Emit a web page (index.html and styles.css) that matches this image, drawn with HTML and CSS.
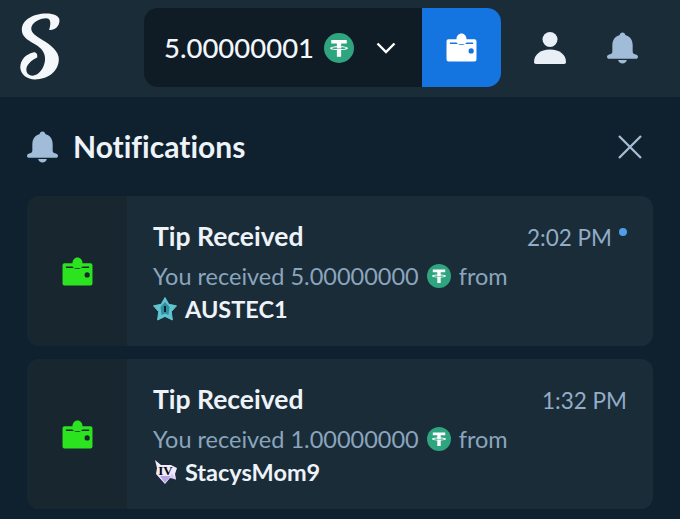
FILE: index.html
```html
<!DOCTYPE html>
<html lang="en">
<head>
<meta charset="utf-8">
<title>Notifications</title>
<link rel="stylesheet" href="styles.css">
</head>
<body>
<svg class="sprites" width="0" height="0" aria-hidden="true">
  <defs>
    <symbol id="wallet" viewBox="0 0 32 30">
      <path fill="currentColor" d="M2.500 6.500H10.800C10.800 3 13 .5 16 .5S21.200 3 21.200 6.500H29.500A2 2 0 0 1 31.500 8.500V27.500A2 2 0 0 1 29.500 29.500H2.500A2 2 0 0 1 .5 27.500V8.500A2 2 0 0 1 2.500 6.500Z"/>
      <path class="wallet-cut" d="M4 9.800H10.800C11.800 11.200 13.700 12.200 16 12.200S20.200 11.200 21.200 9.800H28V11.300H4Z"/>
      <circle class="wallet-cut" cx="26" cy="18.500" r="2.700"/>
    </symbol>
    <symbol id="bell" viewBox="0 0 32 32">
      <path fill="currentColor" d="M16 0C17.600 0 18.700 1 18.900 2.600 24 4 26.500 8 26.500 13.500V19.500C26.500 21 27.200 22 29 22.500 31 23 32 24 32 25.200 32 26.500 31 27 29.800 27H2.200C1 27 0 26.500 0 25.200 0 24 1 23 3 22.500 4.800 22 5.500 21 5.500 19.500V13.500C5.500 8 8 4 13.100 2.600 13.300 1 14.400 0 16 0Z"/>
      <path fill="currentColor" d="M11.500 28.500H20.500C20 30.800 18.200 32 16 32S12 30.800 11.500 28.500Z"/>
    </symbol>
    <symbol id="tether" viewBox="0 0 24 24">
      <circle cx="12" cy="12" r="12" fill="#2fa57f"/>
      <path fill="#fff" d="M5.800 5.500H18.200V8.300H13.700V10.600C16.800 10.800 19.100 11.400 19.100 12.100S16.800 13.400 13.700 13.600V19H10.300V13.600C7.200 13.400 4.900 12.800 4.900 12.100S7.200 10.800 10.300 10.600V8.300H5.800ZM10.300 11.400C8 11.500 6.300 11.800 6.300 12.100 6.300 12.500 8.800 12.800 12 12.800S17.700 12.500 17.700 12.100C17.700 11.800 16 11.500 13.700 11.400V12.300H10.300Z"/>
    </symbol>
  </defs>
</svg>

<header class="topbar">
  <svg class="logo" viewBox="40 25 135 220" aria-label="Logo">
    <path fill="#f4f8fb" d="M135 82C150 85 168 72 168 52 168 38 150 30 125 30 85 30 48 50 48 82 48 100 62 112 90 128 112 141 123 155 122 178 120 205 100 228 82 228 68 228 60 218 63 203 67 190 80 178 97 170 99 160 93 151 84 154 62 160 43 175 43 203 45 225 65 240 90 240 130 240 166 215 166 175 166 150 140 130 115 115 90 100 78 92 78 78 78 60 105 45 125 45 140 45 142 60 135 82Z"/>
  </svg>
  <div class="wallet-pill">
    <div class="balance">
      <span class="balance-value">5.00000001</span>
      <svg class="coin-lg"><use href="#tether"/></svg>
      <svg class="chevron" viewBox="0 0 20 12"><path d="M1.500 1.500 10 10 18.500 1.500" fill="none" stroke="#fff" stroke-width="2.400"/></svg>
    </div>
    <div class="wallet-btn">
      <svg class="wallet-icon on-blue"><use href="#wallet"/></svg>
    </div>
  </div>
  <div class="top-icons">
    <svg class="person" viewBox="0 0 32 32"><circle cx="16" cy="7.500" r="7.500" fill="#e8eff6"/><path fill="#e8eff6" d="M0 30C0 23 6 17.500 16 17.500S32 23 32 30C32 31 31.300 32 30 32H2C.7 32 0 31 0 30Z"/></svg>
    <svg class="bell-top"><use href="#bell"/></svg>
  </div>
</header>

<main class="panel">
  <div class="panel-head">
    <svg class="bell-title"><use href="#bell"/></svg>
    <h1 class="panel-title">Notifications</h1>
    <svg class="close" viewBox="0 0 24 24"><path d="M1 1 23 23M23 1 1 23" fill="none" stroke="#a6bdd3" stroke-width="2.300"/></svg>
  </div>

  <article class="card">
    <div class="card-side"><svg class="wallet-icon on-dark"><use href="#wallet"/></svg></div>
    <div class="card-body">
      <div class="card-row">
        <h2 class="card-title">Tip Received</h2>
        <span class="card-time">2:02 PM<span class="dot"></span></span>
      </div>
      <p class="card-text">You received 5.00000000 <svg class="coin-sm"><use href="#tether"/></svg> from</p>
      <p class="card-user">
        <svg class="badge" viewBox="0 0 24 24">
          <path fill="#62c4cf" stroke="#62c4cf" stroke-linejoin="round" d="M12 .5 15.800 7.300 23.500 8.800 18.300 14.700 19.400 23 12 19.400 4.600 23 5.700 14.700 .5 8.800 8.200 7.300Z"/>
          <path fill="#2f8f9d" d="M12 5 16.500 10 15.500 18 12 16.500 8.500 18 7.500 10Z"/>
          <rect x="11" y="9" width="2" height="6" fill="#0f212e"/>
        </svg>
        AUSTEC1
      </p>
    </div>
  </article>

  <article class="card">
    <div class="card-side"><svg class="wallet-icon on-dark"><use href="#wallet"/></svg></div>
    <div class="card-body">
      <div class="card-row">
        <h2 class="card-title">Tip Received</h2>
        <span class="card-time">1:32 PM</span>
      </div>
      <p class="card-text">You received 1.00000000 <svg class="coin-sm"><use href="#tether"/></svg> from</p>
      <p class="card-user">
        <svg class="badge" viewBox="0 0 24 24">
          <path fill="#f1eafc" d="M2 0 8 5H18L24 8 22 14 23 19 17 18 12 24 3 14 4 8Z"/>
          <path fill="#b9a2e8" d="M7 16H18L12 23Z"/>
          <path fill="#d9c6f5" d="M17 17 23 20 19 13Z"/>
          <text class="badge-text" x="12.500" y="15">IV</text>
        </svg>
        StacysMom9
      </p>
    </div>
  </article>
</main>
</body>
</html>
```

FILE: styles.css
```css
* { box-sizing: border-box; }

html, body {
  margin: 0;
  height: 100%;
}

body {
  background: #0f212e;
  color: #fff;
  font-family: "Lato", "Liberation Sans", sans-serif;
  font-variant-ligatures: none;
  overflow: hidden;
}

.sprites { position: absolute; }

.topbar {
  height: 97px;
  background: #1a2c38;
  display: flex;
  align-items: flex-start;
  padding: 8px 0 0 19px;
}

.logo {
  width: 43px;
  height: 69px;
  margin-top: 4px;
  flex: none;
}

.wallet-pill {
  margin-left: 82px;
  width: 357px;
  height: 79px;
  display: flex;
  flex: none;
  border-radius: 14px;
  overflow: hidden;
  background: #101c25;
}

.balance {
  width: 278px;
  display: flex;
  align-items: center;
  padding-left: 20px;
}

.balance-value {
  font-size: 27.5px;
  font-weight: 500;
  color: #f2f6fa;
}

.coin-lg {
  width: 30px;
  height: 30px;
  margin-left: 10px;
}

.chevron {
  width: 20px;
  height: 12px;
  margin-left: 22px;
}

.wallet-btn {
  width: 79px;
  background: #1475e1;
  display: flex;
  align-items: center;
  justify-content: center;
}

.wallet-icon {
  width: 31px;
  height: 29px;
}

.on-blue { color: #fff; --cut: #1475e1; }
.on-dark { color: #2be31f; --cut: #182630; }
.wallet-cut { fill: var(--cut); }

.top-icons {
  display: flex;
  align-items: center;
  height: 79px;
  margin-left: 33px;
  gap: 41px;
}

.person { width: 32px; height: 32px; }
.bell-top { width: 31px; height: 32px; color: #a1bcd8; }

.panel {
  padding: 0 27px;
}

.panel-head {
  display: flex;
  align-items: center;
  height: 99px;
}

.bell-title { width: 31px; height: 32px; color: #a1bcd8; flex: none; }

.panel-title {
  margin: 0 0 2px 15px;
  font-size: 30px;
  font-weight: 700;
  color: #edf3f8;
  flex: 1;
}

.close { width: 24px; height: 24px; margin-right: 11px; }

.card {
  display: flex;
  height: 150px;
  margin-bottom: 13px;
  border-radius: 12px;
  overflow: hidden;
  background: #1a2c38;
}

.card-side {
  width: 100px;
  flex: none;
  background: #182630;
  display: flex;
  align-items: center;
  justify-content: center;
}

.card-body {
  flex: 1;
  padding: 23px 26px 0;
}

.card-row {
  display: flex;
  justify-content: space-between;
  align-items: center;
}

.card-title {
  margin: 0;
  font-size: 26.5px;
  line-height: 34px;
  font-weight: 700;
  color: #edf3f8;
}

.card-time {
  font-size: 22.500px;
  color: #92adc7;
  position: relative;
  padding-top: 2px;
}

.card-row:has(.dot) .card-time {
  margin-right: 15px;
}

.dot {
  position: absolute;
  right: -15px;
  top: 6px;
  width: 8px;
  height: 8px;
  border-radius: 50%;
  background: #4e9eea;
}

.card-text {
  margin: 8px 0 0;
  display: flex;
  align-items: center;
  gap: 8px;
  font-size: 23.500px;
  line-height: 30px;
  color: #8aa5bd;
}

.coin-sm { width: 24px; height: 24px; }

.card-user {
  margin: 1px 0 0;
  display: flex;
  align-items: center;
  gap: 8px;
  font-size: 23.500px;
  line-height: 34px;
  font-weight: 700;
  color: #edf3f8;
}

.badge { width: 24px; height: 24px; }

.badge-text {
  font-family: "Liberation Serif", serif;
  font-size: 13px;
  font-weight: 700;
  text-anchor: middle;
  fill: #0a0a0a;
}
```
